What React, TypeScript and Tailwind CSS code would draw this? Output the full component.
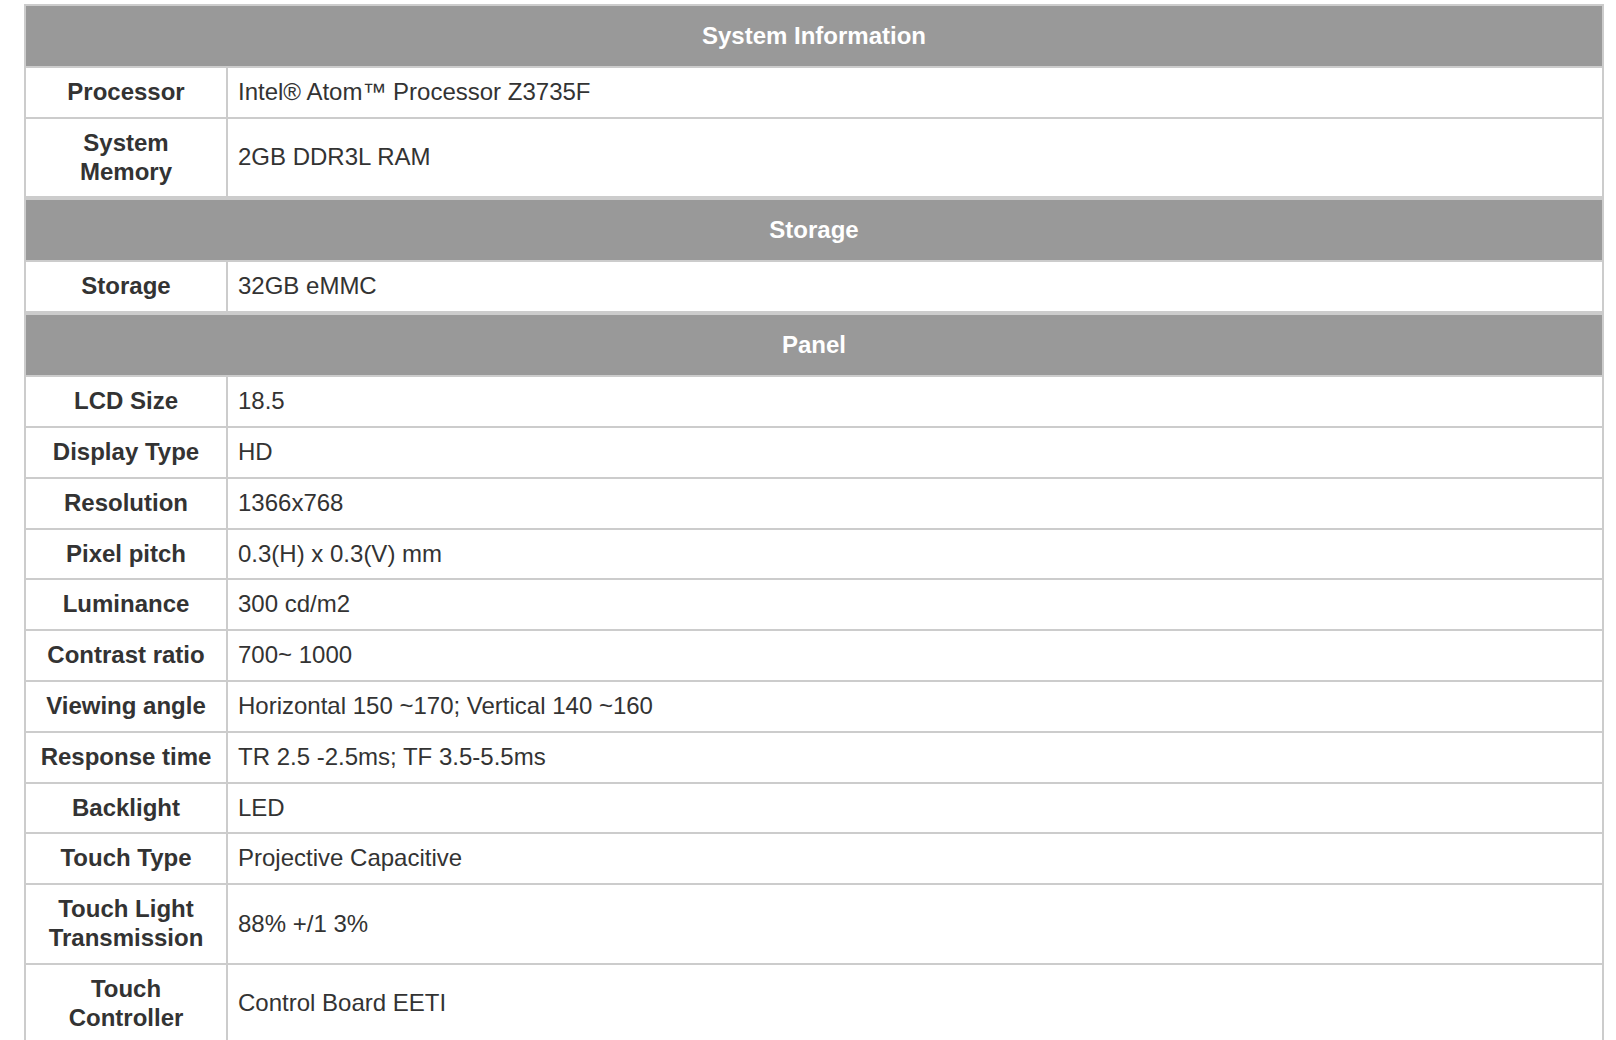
import React from "react";

type Row = { label: string; value: string };
type Section = { title: string; rows: Row[] };

const sections: Section[] = [
  {
    title: "System Information",
    rows: [
      { label: "Processor", value: "Intel® Atom™ Processor Z3735F" },
      { label: "System Memory", value: "2GB DDR3L RAM" },
    ],
  },
  {
    title: "Storage",
    rows: [{ label: "Storage", value: "32GB eMMC" }],
  },
  {
    title: "Panel",
    rows: [
      { label: "LCD Size", value: "18.5" },
      { label: "Display Type", value: "HD" },
      { label: "Resolution", value: "1366x768" },
      { label: "Pixel pitch", value: "0.3(H) x 0.3(V) mm" },
      { label: "Luminance", value: "300 cd/m2" },
      { label: "Contrast ratio", value: "700~ 1000" },
      { label: "Viewing angle", value: "Horizontal 150 ~170; Vertical 140 ~160" },
      { label: "Response time", value: "TR 2.5 -2.5ms; TF 3.5-5.5ms" },
      { label: "Backlight", value: "LED" },
      { label: "Touch Type", value: "Projective Capacitive" },
      { label: "Touch Light Transmission", value: "88% +/1 3%" },
      { label: "Touch Controller", value: "Control Board EETI" },
    ],
  },
];

function SpecTable({ section }: { section: Section }) {
  return (
    <table className="w-[1580px] table-fixed border-separate border-spacing-0 border border-[#cccccc]">
      <colgroup>
        <col className="w-[202px]" />
        <col />
      </colgroup>
      <thead>
        <tr>
          <th
            colSpan={2}
            className="border border-[#cccccc] bg-[#999999] py-4 px-[10px] text-center text-[24px] leading-[28px] font-bold text-white"
          >
            {section.title}
          </th>
        </tr>
      </thead>
      <tbody>
        {section.rows.map((row, i) => (
          <tr key={i}>
            <td className="border border-[#cccccc] py-[10px] px-[10px] text-center align-middle text-[24px] leading-[28.8px] font-bold text-[#333333]">
              {row.label}
            </td>
            <td className="border border-[#cccccc] py-[10px] px-[10px] text-left align-middle text-[24px] leading-[28.8px] text-[#333333]">
              {row.value}
            </td>
          </tr>
        ))}
      </tbody>
    </table>
  );
}

export default function App() {
  return (
    <div className="h-screen overflow-hidden bg-white font-['Liberation_Sans',Arial,sans-serif]">
      <div className="ml-[24px] pt-[4px] flex flex-col">
        {sections.map((s, i) => (
          <SpecTable key={i} section={s} />
        ))}
      </div>
    </div>
  );
}
